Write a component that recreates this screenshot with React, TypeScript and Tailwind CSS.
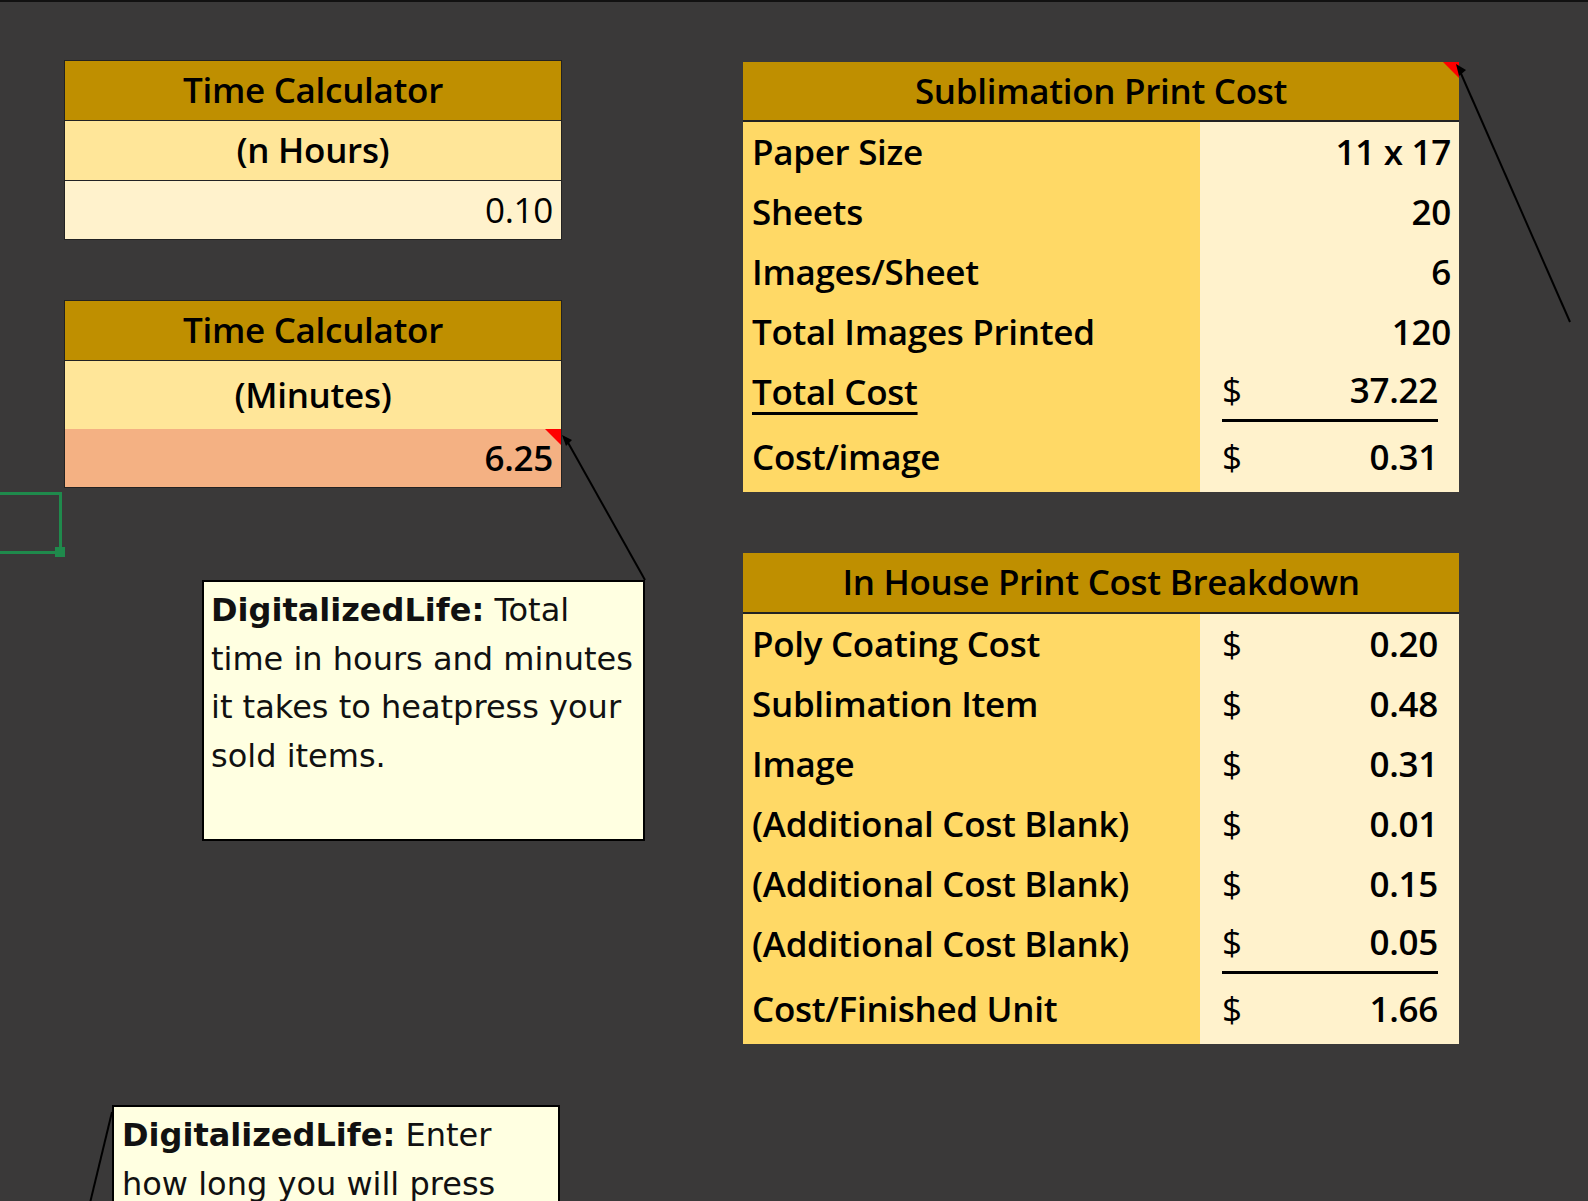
import React from "react";

const F = { fontFamily: "'Open Sans', 'Liberation Sans', sans-serif" };
const T = { fontFamily: "'DejaVu Sans', Tahoma, sans-serif" };

function Row({ label, val, dollar, underline, tall, ulabel }: { label: string; val: string; dollar?: boolean; underline?: boolean; tall?: boolean; ulabel?: boolean }) {
  return (
    <div className={`flex items-center ${tall ? "h-[70px]" : "h-[60px]"}`}>
      <div className="w-[457px] h-full flex items-center bg-[#ffd966] pl-[9px] whitespace-nowrap">
        <span className={ulabel ? "underline decoration-[3px] underline-offset-[7px]" : ""}>{label}</span>
      </div>
      <div className="flex-1 h-full bg-[#fff2cc] flex items-center pl-[22px] pr-[8px]">
        {dollar ? (
          <div className={`flex w-[216px] h-full items-center justify-between ${underline ? "border-b-[3px] border-black" : ""}`}>
            <span className="font-normal">$</span>
            <span>{val}</span>
          </div>
        ) : (
          <span className="ml-auto">{val}</span>
        )}
      </div>
    </div>
  );
}

export default function App() {
  return (
    <div className="relative w-[1588px] h-[1201px] bg-[#3a3939] overflow-hidden text-black text-[35px] font-semibold tracking-[-0.3px] border-t-[2px] border-[#111]" style={F}>
      <div className="flex pt-[58px]">
        <div className="ml-[64px] w-[498px] flex flex-col">
          <div className="border-[1.5px] border-[#222]">
            <div className="h-[60px] bg-[#bf8f00] flex items-center justify-center border-b-[1.5px] border-[#222]">Time Calculator</div>
            <div className="h-[60px] bg-[#ffe699] flex items-center justify-center border-b-[1.5px] border-[#222]">(n Hours)</div>
            <div className="h-[58px] bg-[#fff2cc] flex items-center justify-end pr-[8px] font-normal">0.10</div>
          </div>
          <div className="mt-[60px] border-[1.5px] border-[#222]">
            <div className="h-[60px] bg-[#bf8f00] flex items-center justify-center border-b-[1.5px] border-[#222]">Time Calculator</div>
            <div className="h-[68px] bg-[#ffe699] flex items-center justify-center">(Minutes)</div>
            <div className="relative h-[58px] bg-[#f4b183] flex items-center justify-end pr-[8px]">6.25
              <div className="absolute top-0 right-0 w-0 h-0 border-t-[16px] border-l-[16px] border-t-[#ff0000] border-l-transparent" />
            </div>
          </div>
        </div>
        <div className="ml-[181px] w-[716px] flex flex-col">
          <div className="pt-[2px]">
            <div className="relative h-[60px] bg-[#bf8f00] flex items-center justify-center border-b-[2px] border-[#222]">Sublimation Print Cost
              <div className="absolute top-0 right-0 w-0 h-0 border-t-[16px] border-l-[16px] border-t-[#ff0000] border-l-transparent" />
            </div>
            <Row label="Paper Size" val="11 x 17" />
            <Row label="Sheets" val="20" />
            <Row label="Images/Sheet" val="6" />
            <Row label="Total Images Printed" val="120" />
            <Row label="Total Cost" val="37.22" dollar underline ulabel />
            <Row label="Cost/image" val="0.31" dollar tall />
          </div>
          <div className="mt-[61px]">
            <div className="h-[61px] bg-[#bf8f00] flex items-center justify-center border-b-[2px] border-[#222]">In House Print Cost Breakdown</div>
            <Row label="Poly Coating Cost" val="0.20" dollar />
            <Row label="Sublimation Item" val="0.48" dollar />
            <Row label="Image" val="0.31" dollar />
            <Row label="(Additional Cost Blank)" val="0.01" dollar />
            <Row label="(Additional Cost Blank)" val="0.15" dollar />
            <Row label="(Additional Cost Blank)" val="0.05" dollar underline />
            <Row label="Cost/Finished Unit" val="1.66" dollar tall />
          </div>
        </div>
      </div>

      <div className="absolute left-[-4px] top-[490px] w-[66px] h-[62px] border-[3px] border-[#1f8a4c]">
        <div className="absolute -right-[6px] -bottom-[6px] w-[10px] h-[10px] bg-[#1f8a4c]" />
      </div>

      <svg className="absolute inset-0 pointer-events-none" width="1588" height="1201">
        <line x1="645" y1="578" x2="566" y2="437" stroke="#000" strokeWidth="2" />
        <polygon points="562,433 572,438 566,444" fill="#000" />
        <line x1="1459" y1="67" x2="1570" y2="320" stroke="#000" strokeWidth="2" />
        <polygon points="1456,62 1466,68 1459,74" fill="#000" />
        <line x1="112" y1="1110" x2="90" y2="1201" stroke="#000" strokeWidth="2" />
      </svg>

      <div className="absolute left-[202px] top-[578px] w-[443px] h-[261px] bg-[#ffffe1] border-[2px] border-black px-[7px] pt-[4px] text-[32px] font-normal tracking-normal leading-[48.5px] text-[#111]" style={T}>
        <span className="font-bold">DigitalizedLife:</span> Total time in hours and minutes it takes to heatpress your sold items.
      </div>
      <div className="absolute left-[112px] top-[1103px] w-[448px] h-[140px] bg-[#ffffe1] border-[2px] border-black px-[8px] pt-[4px] text-[32px] font-normal tracking-normal leading-[48.5px] text-[#111]" style={T}>
        <span className="font-bold">DigitalizedLife:</span> Enter how long you will press
      </div>
    </div>
  );
}
